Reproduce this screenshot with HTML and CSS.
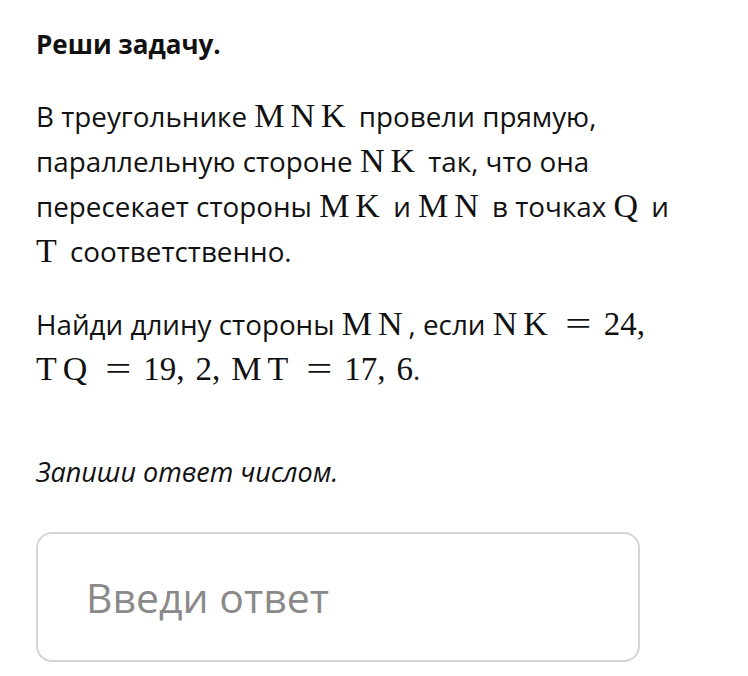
FILE: index.html
```html
<!DOCTYPE html>
<html lang="ru">
<head>
<meta charset="utf-8">
<link rel="stylesheet" href="styles.css">
</head>
<body>
<main class="task">
  <h1 class="task-title">Реши задачу.</h1>
  <p class="task-text">В треугольнике <span class="m v">MNK</span> провели прямую,<br>параллельную стороне <span class="m v">NK</span> так, что она<br>пересекает стороны <span class="m v">MK</span> и <span class="m v">MN</span> в точках <span class="m v">Q</span> и<br><span class="m v">T</span> соответственно.</p>
  <p class="task-text">Найди длину стороны <span class="m v">MN</span>, если <span class="m"><span class="v">NK</span><span class="op"><span class="eq">=</span></span>24,</span><br><span class="m"><span class="v">TQ</span><span class="op"><span class="eq">=</span></span>19,<span class="sp"></span>2,<span class="sp"></span><span class="v">MT</span><span class="op"><span class="eq">=</span></span>17,<span class="sp"></span>6</span>.</p>
  <p class="task-hint">Запиши ответ числом.</p>
  <div class="answer"><span class="placeholder">Введи ответ</span></div>
</main>
</body>
</html>
```

FILE: styles.css
```css
html, body {
  margin: 0;
  background: #fff;
}
.task {
  padding: 22px 36px 0 36px;
  font-family: "Open Sans", "Noto Sans", sans-serif;
  color: #111;
}
.task-title {
  margin: 0;
  font-size: 26px;
  font-weight: 700;
  line-height: 44px;
}
.task-text {
  margin: 28px 0 0;
  font-size: 27.8px;
  line-height: 45px;
}
.m {
  font-family: "Liberation Serif", "DejaVu Serif", serif;
  font-size: 33px;
  line-height: 1;
}
.v {
  font-size: 34px;
  letter-spacing: 6px;
}
.op {
  display: inline-block;
  width: 27px;
  margin: 0 12px 0 11px;
  text-align: center;
}
.eq {
  display: inline-block;
  transform: scaleX(1.4);
}
.sp {
  display: inline-block;
  width: 11px;
}
.task-hint {
  margin: 57px 0 0;
  font-size: 27px;
  font-style: italic;
  line-height: 45px;
}
.answer {
  margin-top: 38px;
  width: 552px;
  height: 126px;
  border: 2px solid #d4d4d4;
  border-radius: 16px;
  display: flex;
  align-items: center;
  padding-left: 48px;
  box-sizing: content-box;
}
.placeholder {
  font-size: 41px;
  color: #8a8a8a;
}
```
